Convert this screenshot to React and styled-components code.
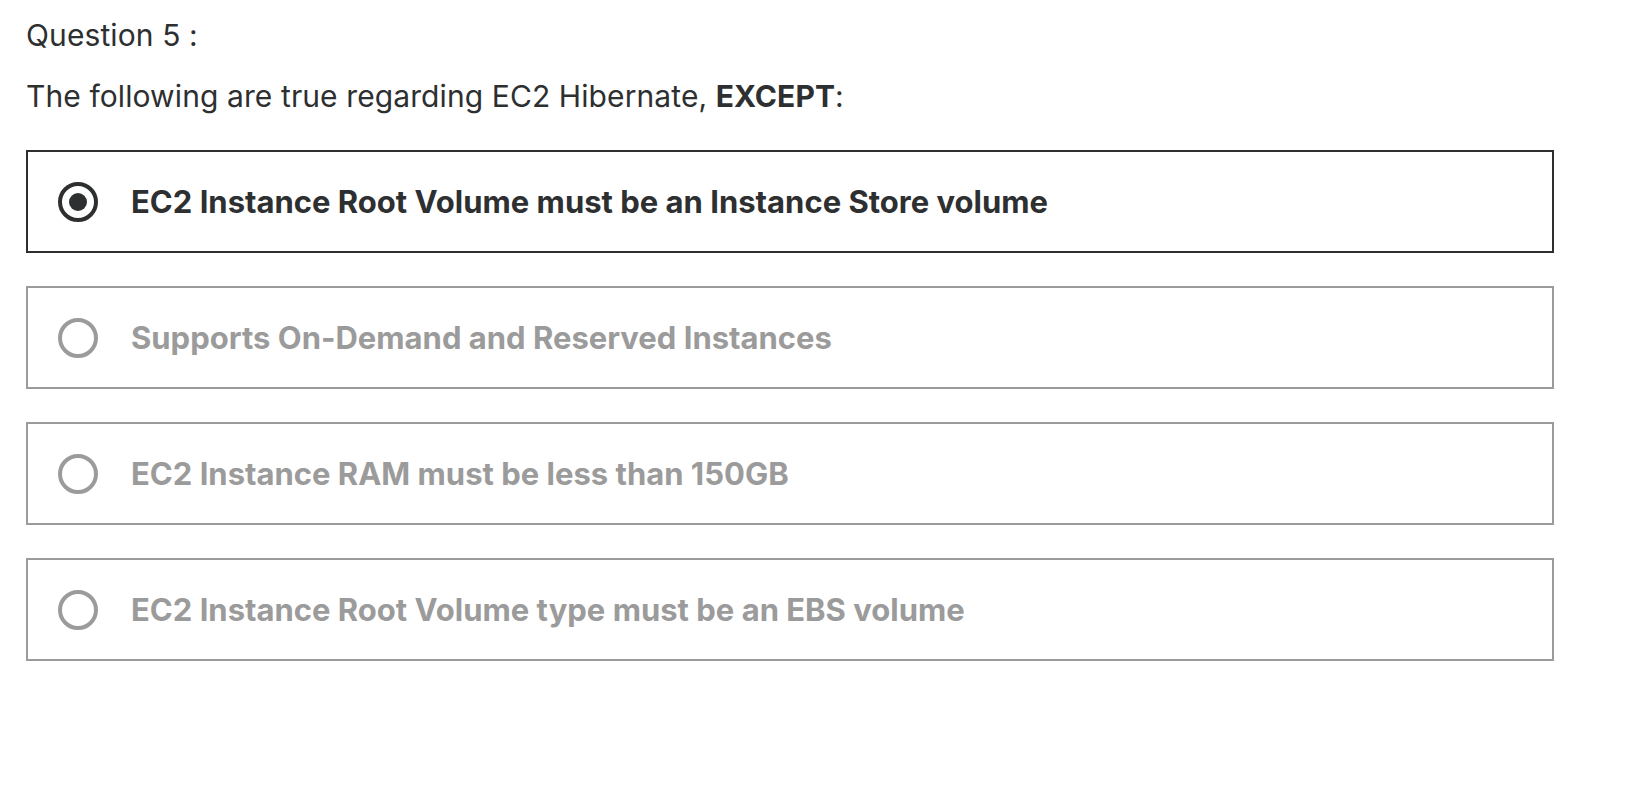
import React from "react";
import styled, { createGlobalStyle } from "styled-components";

const GlobalStyle = createGlobalStyle`
  body {
    margin: 0;
    background: #fff;
    font-family: Inter, "Noto Sans", sans-serif;
    color: #2d2f31;
  }
`;

const Page = styled.div`
  padding: 15px 0 0 26px;
  width: 1528px;
`;

const Label = styled.div`
  font-size: 30px;
  line-height: 40px;
  font-weight: 400;
  letter-spacing: 0.1px;
`;

const Prompt = styled.p`
  margin: 21px 0 34px;
  font-size: 30px;
  line-height: 40px;
  letter-spacing: 0.1px;

  strong {
    font-weight: 700;
  }
`;

const Options = styled.div`
  display: flex;
  flex-direction: column;
  gap: 33px;
`;

const Option = styled.label`
  display: flex;
  align-items: center;
  gap: 33px;
  height: 103px;
  box-sizing: border-box;
  padding: 0 0 0 30px;
  border: 2px solid ${(p) => (p.selected ? "#2d2f31" : "#9b9b9b")};
  color: ${(p) => (p.selected ? "#2d2f31" : "#9b9b9b")};
  cursor: pointer;
`;

const Radio = styled.span`
  position: relative;
  width: 40px;
  height: 40px;
  box-sizing: border-box;
  border-radius: 50%;
  border: 4px solid currentColor;
  flex-shrink: 0;

  &::after {
    content: "";
    display: ${(p) => (p.checked ? "block" : "none")};
    position: absolute;
    inset: 7px;
    border-radius: 50%;
    background: currentColor;
  }
`;

const OptionText = styled.span`
  font-size: 31px;
  font-weight: 700;
  letter-spacing: 0;
`;

const answers = [
  "EC2 Instance Root Volume must be an Instance Store volume",
  "Supports On-Demand and Reserved Instances",
  "EC2 Instance RAM must be less than 150GB",
  "EC2 Instance Root Volume type must be an EBS volume",
];

export default function App() {
  return (
    <>
      <GlobalStyle />
      <Page>
        <Label>Question 5 :</Label>
        <Prompt>
          The following are true regarding EC2 Hibernate, <strong>EXCEPT</strong>:
        </Prompt>
        <Options>
          {answers.map((a, i) => (
            <Option key={a} selected={i === 0}>
              <Radio checked={i === 0} />
              <OptionText>{a}</OptionText>
            </Option>
          ))}
        </Options>
      </Page>
    </>
  );
}
